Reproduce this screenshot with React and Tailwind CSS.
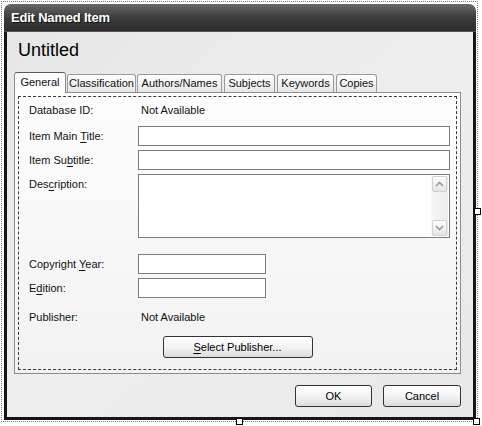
import React from 'react';

// little helpers for the WinForms-ish look
const Field = ({ w, h = 20 }) => (
  <div className={`${w} bg-white border border-[#7b7b7b]`} style={{ height: h }} />
);

const Label = ({ pre, u, post }) => (
  <span>
    {pre}
    {u && <span className="underline underline-offset-[2px]">{u}</span>}
    {post}
  </span>
);

const Chevron = ({ up }) => (
  <svg width="9" height="6" viewBox="0 0 9 6" className="block">
    <path
      d={up ? 'M1 5 L4.5 1.5 L8 5' : 'M1 1 L4.5 4.5 L8 1'}
      fill="none"
      stroke="#9a9a9a"
      strokeWidth="1.6"
    />
  </svg>
);

const tabs = [
  { name: 'General', w: 'w-[52px]', ml: '' , active: true },
  { name: 'Classification', w: 'w-[69px]', ml: 'ml-[1px]' },
  { name: 'Authors/Names', w: 'w-[85px]', ml: 'ml-[1px]' },
  { name: 'Subjects', w: 'w-[51px]', ml: 'ml-[2px]' },
  { name: 'Keywords', w: 'w-[57px]', ml: 'ml-[2px]' },
  { name: 'Copies', w: 'w-[41px]', ml: 'ml-[2px]' },
];

const Button = ({ w, children }) => (
  <button className={`${w} h-[22px] rounded-[3px] border border-[#333] bg-gradient-to-b from-white via-[#f4f4f4] to-[#dcdcdc] text-[11px] text-black leading-none`}>
    {children}
  </button>
);

export default function App() {
  return (
    <div
      className="relative w-[482px] h-[426px] bg-white overflow-hidden pl-[4px] pt-[4px] text-[11px] text-[#111]"
      style={{ fontFamily: '"Liberation Sans", Arial, sans-serif' }}
    >
      {/* designer selection outline */}
      <div className="absolute left-[1px] top-[1px] w-[477px] h-[421px] border border-dotted border-[#7a7a7a]" />

      {/* dialog window */}
      <div className="relative w-[472px] h-[416px] flex flex-col">
        <div className="h-[28px] shrink-0 rounded-t-[7px] bg-gradient-to-b from-[#6a6a6a] via-[#3c3c3c] to-[#2c2c2c] flex items-center pl-[7px] border-b border-[#555]">
          <span className="text-white font-bold text-[13px] tracking-[-0.2px]" style={{ textShadow: '1px 1px 0 #111' }}>
            Edit Named Item
          </span>
        </div>

        <div className="flex-1 flex flex-col border-x-[3px] border-b-[3px] border-[#161616] bg-gradient-to-br from-[#e6e6e6] via-[#eeeeee] to-[#e8e8e8] pl-[7px] pr-[12px]">
          <div className="mt-[7px] ml-[4px] h-[22px] leading-[22px] text-[18px] text-black">Untitled</div>

          {/* tab strip */}
          <div className="mt-[11px] h-[20px] flex items-end relative z-10">
            {tabs.map((t) =>
              t.active ? (
                <div
                  key={t.name}
                  className={`${t.w} ${t.ml} h-[21px] -mb-[1px] rounded-t-[3px] border border-b-0 border-[#8c8c8c] border-t-[#5a5a5a] bg-[#fcfcfc] flex items-center justify-center pb-[2px]`}
                >
                  {t.name}
                </div>
              ) : (
                <div
                  key={t.name}
                  className={`${t.w} ${t.ml} h-[18px] rounded-t-[3px] border border-b-0 border-[#9a9a9a] bg-gradient-to-b from-white to-[#e6e6e6] flex items-center justify-center`}
                >
                  {t.name}
                </div>
              )
            )}
          </div>

          {/* tab page */}
          <div className="w-[447px] h-[282px] border border-[#8c8c8c] bg-gradient-to-b from-[#fdfdfd] to-[#f2f2f2] p-[3px] flex">
            <div className="flex-1 border border-dashed border-[#3a3a3a] pl-[10px] pt-[3px] flex flex-col">
              <div className="h-[20px] flex items-center">
                <div className="w-[109px]">Database ID:</div>
                <div className="pl-[3px]">Not Available</div>
              </div>

              <div className="mt-[6px] h-[20px] flex items-center">
                <div className="w-[109px]"><Label pre="Item Main " u="T" post="itle:" /></div>
                <Field w="w-[312px]" />
              </div>

              <div className="mt-[4px] h-[20px] flex items-center">
                <div className="w-[109px]"><Label pre="Item Su" u="b" post="title:" /></div>
                <Field w="w-[312px]" />
              </div>

              <div className="mt-[4px] h-[64px] flex items-start">
                <div className="w-[109px] pt-[2px]"><Label pre="Des" u="c" post="ription:" /></div>
                <div className="w-[312px] h-[64px] bg-white border border-[#7b7b7b] flex justify-end p-[1px]">
                  <div className="w-[17px] h-full bg-gradient-to-r from-[#f6f6f6] to-[#ececec] flex flex-col justify-between">
                    <div className="h-[16px] mx-[1px] rounded-[2px] border border-[#d0d0d0] bg-gradient-to-b from-white to-[#e4e4e4] flex items-center justify-center">
                      <Chevron up />
                    </div>
                    <div className="h-[16px] mx-[1px] rounded-[2px] border border-[#d0d0d0] bg-gradient-to-b from-white to-[#e4e4e4] flex items-center justify-center">
                      <Chevron />
                    </div>
                  </div>
                </div>
              </div>

              <div className="mt-[16px] h-[20px] flex items-center">
                <div className="w-[109px]"><Label pre="Copyright " u="Y" post="ear:" /></div>
                <Field w="w-[128px]" />
              </div>

              <div className="mt-[4px] h-[20px] flex items-center">
                <div className="w-[109px]"><Label pre="E" u="d" post="ition:" /></div>
                <Field w="w-[128px]" />
              </div>

              <div className="mt-[9px] h-[20px] flex items-center">
                <div className="w-[109px]">Publisher:</div>
                <div className="pl-[3px]">Not Available</div>
              </div>

              <div className="mt-[9px] flex justify-center pr-[10px]">
                <Button w="w-[150px]">
                  <Label u="S" post="elect Publisher..." />
                </Button>
              </div>
            </div>
          </div>

          {/* dialog buttons */}
          <div className="mt-[11px] flex justify-end gap-[11px]">
            <Button w="w-[77px]">OK</Button>
            <Button w="w-[78px]">Cancel</Button>
          </div>
        </div>
      </div>

      {/* resize grips */}
      <div className="absolute left-[474px] top-[208px] w-[7px] h-[7px] bg-white border border-black" />
      <div className="absolute left-[236px] top-[418px] w-[7px] h-[7px] bg-white border border-black" />
      <div className="absolute left-[473px] top-[418px] w-[7px] h-[7px] bg-white border border-black" />
    </div>
  );
}
